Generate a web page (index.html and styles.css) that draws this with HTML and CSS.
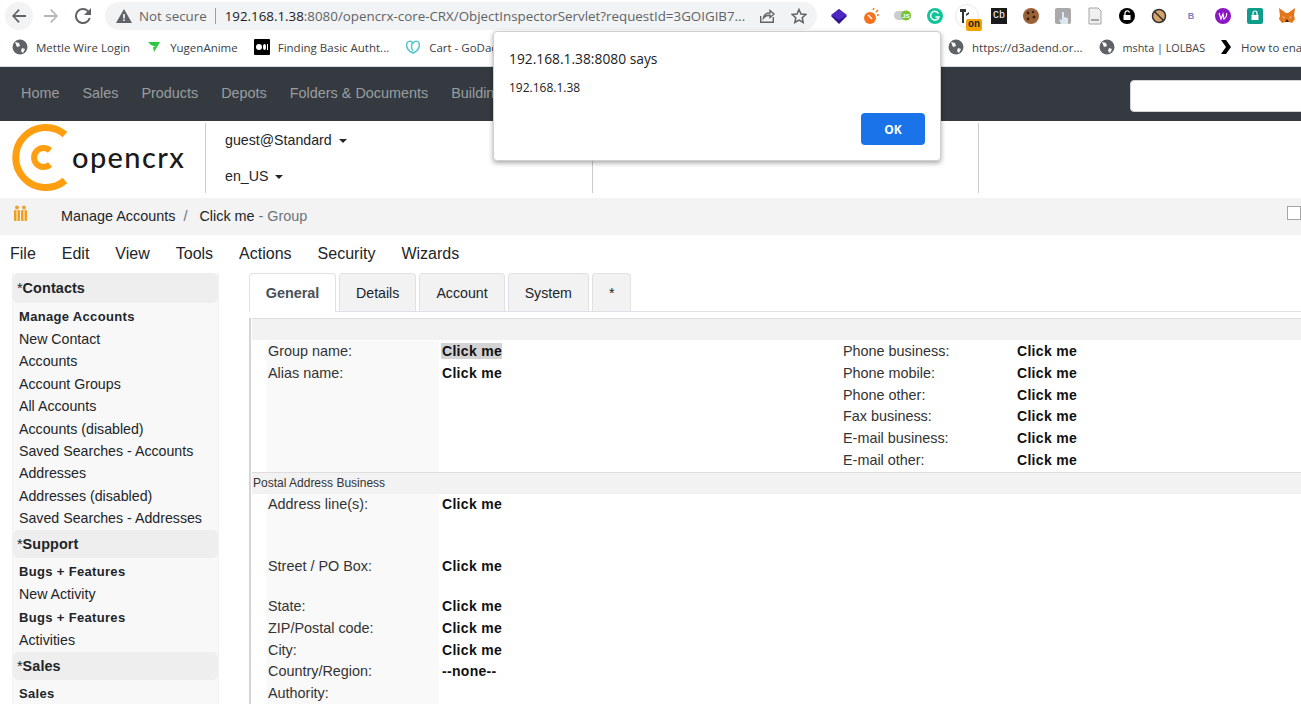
FILE: index.html

```html
<!DOCTYPE html>
<html lang="en">
<head>
    <meta charset="UTF-8">
    <title>Click me - Group</title>
    <link rel="stylesheet" href="styles.css">
</head>
<body>
    <div class="toolbar">
        <span class="round active"><svg width="16" height="16" viewBox="0 0 16 16"><path d="M15 7H4l4.7-4.6L7.5 1 1 8l6.500 7 1.200-1.400L4 9h11z" fill="#5f6368"/></svg></span>
        <span class="round"><svg width="16" height="16" viewBox="0 0 16 16"><path d="M1 7h11L7.300 2.400 8.500 1 15 8l-6.500 7-1.200-1.400L12 9H1z" fill="#b4b7ba"/></svg></span>
        <span class="round"><svg width="16" height="16" viewBox="0 0 16 16"><path d="M13.600 2.400A7.900 7.900 0 0 0 8 0a8 8 0 1 0 7.700 10h-2.100A6 6 0 1 1 8 2c1.700 0 3.100.7 4.200 1.800L9 7h7V0z" fill="#5f6368"/></svg></span>
        <div class="omnibox">
            <svg class="warn" width="16" height="14" viewBox="0 0 16 14"><path d="M8 0l8 14H0z" fill="#5f6368"/><path d="M7.200 5h1.600v4.500H7.200zM7.200 10.500h1.600V12H7.200z" fill="#fff"/></svg>
            <span class="secure">Not secure</span>
            <span class="url"><b>192.168.1.38</b>:8080/opencrx-core-CRX/ObjectInspectorServlet?requestId=3GOIGIB7...</span>
            <svg class="share" width="16" height="16" viewBox="0 0 16 16" fill="none" stroke="#5f6368" stroke-width="1.400"><path d="M1.700 8v6.300h12.600V9"/><path d="M4.500 10c.5-3.200 3-5 6.500-5V2.500L15 6l-4 3.500V7.300c-2.800 0-5 .8-6.500 2.700z"/></svg>
            <svg class="star" width="16" height="16" viewBox="0 0 16 16"><path d="M8 1.500l2 4.500 4.800.5-3.600 3.200 1 4.800L8 12.100l-4.200 2.400 1-4.800L1.200 6.500 6 6z" fill="none" stroke="#5f6368" stroke-width="1.500"/></svg>
        </div>
        <div class="extensions">
            <svg class="ext" width="18" height="18" viewBox="0 0 18 18"><path d="M9 2l8 7-8 8-8-8z" fill="#2c1590"/><path d="M1 8l8-6 8 6-8 5z" fill="#4f28c4"/></svg>
            <svg class="ext" width="18" height="18" viewBox="0 0 18 18"><circle cx="8" cy="11" r="6" fill="#f7711f"/><path d="M11 3l1-2M14 5l2-2M15 8h2" stroke="#f7711f" stroke-width="1.500"/><path d="M6 8l4 4" stroke="#fff" stroke-width="1.500"/></svg>
            <svg class="ext" width="18" height="18" viewBox="0 0 18 18"><rect x="0" y="4" width="17" height="9" rx="4.500" fill="#c9cccf"/><circle cx="12" cy="8.500" r="5" fill="#7cc42c"/><text x="12" y="11" class="ext-js">JS</text></svg>
            <svg class="ext" width="18" height="18" viewBox="0 0 18 18"><circle cx="9" cy="9" r="8" fill="#15c39a"/><path d="M12.500 6.300A4.300 4.300 0 1 0 13 10H9.500" fill="none" stroke="#fff" stroke-width="1.500"/></svg>
            <span class="ext-on"><svg width="24" height="24" viewBox="0 0 24 24"><circle cx="12" cy="12" r="11.500" fill="#fff" stroke="#e8e8e8"/><path d="M7 5h2v14H7zM5 5h6v3H5zM11 10l3-2v2l-3 2z" fill="#333"/></svg><span class="on-badge">on</span></span>
            <span class="ext-cb">Cb</span>
            <svg class="ext" width="18" height="18" viewBox="0 0 18 18"><circle cx="9" cy="9" r="8" fill="#9a6238"/><circle cx="6" cy="6" r="1.400" fill="#3a2110"/><circle cx="11" cy="5" r="1.200" fill="#3a2110"/><circle cx="12" cy="10" r="1.500" fill="#3a2110"/><circle cx="6" cy="12" r="1.400" fill="#3a2110"/></svg>
            <svg class="ext" width="18" height="18" viewBox="0 0 18 18"><rect x="1" y="1" width="16" height="16" rx="2" fill="#a9a9a9"/><path d="M8 5h2v5l4 1v6H7l-2-5 3 1z" fill="#dce9f3"/></svg>
            <svg class="ext" width="18" height="18" viewBox="0 0 18 18"><path d="M3 1h9l3 3v13H3z" fill="#f0f0f0" stroke="#a5a5a5"/><rect x="5" y="12" width="8" height="2" fill="#a5a5a5"/></svg>
            <svg class="ext" width="18" height="18" viewBox="0 0 18 18"><circle cx="9" cy="9" r="8" fill="#000"/><rect x="5.500" y="8" width="7" height="5" fill="#fff"/><path d="M7 8V6a2.300 2.300 0 0 1 4.500-.5" fill="none" stroke="#fff" stroke-width="1.300"/></svg>
            <svg class="ext" width="18" height="18" viewBox="0 0 18 18"><circle cx="9" cy="9" r="6.500" fill="#d7a36b" stroke="#333" stroke-width="1.500"/><path d="M4 4l10 10" stroke="#333" stroke-width="1.500"/></svg>
            <span class="ext-b">B</span>
            <svg class="ext" width="18" height="18" viewBox="0 0 18 18"><circle cx="9" cy="9" r="8" fill="#8a16c4"/><path d="M5 6l2 6 2-5 1 5c2-1 3-4 2.500-6" fill="none" stroke="#fff" stroke-width="1.200"/></svg>
            <svg class="ext" width="18" height="18" viewBox="0 0 18 18"><rect x="1" y="1" width="16" height="16" rx="2" fill="#0f9c8a"/><rect x="5.500" y="8" width="7" height="5" fill="#fff"/><path d="M7 8V6a2 2 0 0 1 4 0v2" fill="none" stroke="#fff" stroke-width="1.200"/></svg>
            <svg class="ext" width="18" height="18" viewBox="0 0 18 18"><path d="M1 1l7 5h2l7-5-1 8 1 3-3 4-3-1H7l-3 1-3-4 1-3z" fill="#e2761b"/><path d="M7 15l2-3 2 3z" fill="#3a2a1c"/><path d="M4 9l3 1-1 2zM14 9l-3 1 1 2z" fill="#f6b07a"/></svg>
        </div>
    </div>

    <div class="bookmarks">
        <div class="marks-left">
            <span class="mark"><svg class="globe" width="16" height="16" viewBox="0 0 16 16"><circle cx="8" cy="8" r="7.500" fill="#5f6368"/><path d="M3 3l4 1 1 3-3 1zM10 9l3 1-2 4-2-2z" fill="#fff"/></svg>Mettle Wire Login</span>
            <span class="mark"><svg width="16" height="16" viewBox="0 0 16 16"><path d="M2 3h12l-6 10-1-5h3L5 6z" fill="#27c93f"/></svg>YugenAnime</span>
            <span class="mark"><svg width="16" height="16" viewBox="0 0 16 16"><rect width="16" height="16" rx="1" fill="#000"/><circle cx="5" cy="8" r="3" fill="#fff"/><ellipse cx="10.500" cy="8" rx="1.500" ry="3" fill="#fff"/><rect x="13" y="5" width="1" height="6" fill="#fff"/></svg>Finding Basic Autht...</span>
            <span class="mark"><svg width="16" height="16" viewBox="0 0 16 16"><path d="M8 14C3 12 1 8 2 4c1-2 4-3 6 0 2-3 5-2 6 0 1 4-1 8-6 10zM8 3C6 6 6 9 8 12" fill="none" stroke="#4cc6cb" stroke-width="1.400"/></svg>Cart - GoDaddy</span>
        </div>
        <span class="mark"><svg class="globe" width="16" height="16" viewBox="0 0 16 16"><circle cx="8" cy="8" r="7.500" fill="#5f6368"/><path d="M3 3l4 1 1 3-3 1zM10 9l3 1-2 4-2-2z" fill="#fff"/></svg>https://d3adend.or...</span>
        <span class="mark mark-narrow"><svg class="globe" width="16" height="16" viewBox="0 0 16 16"><circle cx="8" cy="8" r="7.500" fill="#5f6368"/><path d="M3 3l4 1 1 3-3 1zM10 9l3 1-2 4-2-2z" fill="#fff"/></svg>mshta | LOLBAS</span>
        <span class="mark mark-tight"><svg width="12" height="16" viewBox="0 0 12 16"><path d="M1 1h5l5 7-5 7H1l5-7z" fill="#000"/></svg>How to enable</span>
    </div>

    <nav class="navbar">
        <a>Home</a><a>Sales</a><a>Products</a><a>Depots</a><a>Folders &amp; Documents</a><a>Buildings</a>
        <input class="search" type="text">
    </nav>

    <header class="page-head">
        <div class="logo">
            <svg width="66" height="67" viewBox="0 0 66 67" fill="none" stroke="#ff9e0f"><path d="M53 10.500A30 30 0 1 0 53 56.500" stroke-width="7"/><path d="M38 26.500A9.500 9.500 0 1 0 38 40.500" stroke-width="6"/></svg>
            <span class="logo-text">opencrx</span>
        </div>
        <div class="head-cell user-cell">
            <div class="drop">guest@Standard<i class="caret"></i></div>
            <div class="drop">en_US<i class="caret"></i></div>
        </div>
        <div class="head-cell mid-cell"></div>
        <div class="head-cell"></div>
    </header>

    <div class="crumbs">
        <svg class="crumb-icon" width="16" height="17" viewBox="0 0 16 17"><circle cx="4" cy="2.500" r="2" fill="#e8a33a"/><circle cx="11" cy="2.500" r="2" fill="#e8a33a"/><rect x="1" y="5" width="6" height="11" rx="1" fill="#f0a020"/><rect x="8" y="5" width="6" height="11" rx="1" fill="#f0a020"/><path d="M4 5v11M11 5v11" stroke="#fff3d8"/></svg>
        <span class="crumb">Manage Accounts</span><span class="crumb-sep">/</span><span class="crumb">Click me <em>- Group</em></span>
        <input class="crumb-check" type="checkbox">
    </div>

    <div class="menu">
        <a>File</a><a>Edit</a><a>View</a><a>Tools</a><a>Actions</a><a>Security</a><a>Wizards</a>
    </div>

    <div class="main">
        <aside class="sidebar">
            <h3>*<b>Contacts</b></h3>
            <ul>
                <li class="strong">Manage Accounts</li>
                <li>New Contact</li>
                <li>Accounts</li>
                <li>Account Groups</li>
                <li>All Accounts</li>
                <li>Accounts (disabled)</li>
                <li>Saved Searches - Accounts</li>
                <li>Addresses</li>
                <li>Addresses (disabled)</li>
                <li>Saved Searches - Addresses</li>
            </ul>
            <h3>*<b>Support</b></h3>
            <ul>
                <li class="strong">Bugs + Features</li>
                <li>New Activity</li>
                <li class="strong">Bugs + Features</li>
                <li>Activities</li>
            </ul>
            <h3>*<b>Sales</b></h3>
            <ul>
                <li class="strong">Sales</li>
            </ul>
        </aside>

        <section class="content">
            <div class="tabs">
                <a class="tab current">General</a><a class="tab">Details</a><a class="tab">Account</a><a class="tab">System</a><a class="tab">*</a>
            </div>
            <div class="panel">
                <div class="group-title"></div>
                <div class="fields first">
                    <div class="col left">
                        <div class="field"><label>Group name:</label><span class="picked">Click me</span></div>
                        <div class="field"><label>Alias name:</label><span>Click me</span></div>
                    </div>
                    <div class="col right">
                        <div class="field"><label>Phone business:</label><span>Click me</span></div>
                        <div class="field"><label>Phone mobile:</label><span>Click me</span></div>
                        <div class="field"><label>Phone other:</label><span>Click me</span></div>
                        <div class="field"><label>Fax business:</label><span>Click me</span></div>
                        <div class="field"><label>E-mail business:</label><span>Click me</span></div>
                        <div class="field"><label>E-mail other:</label><span>Click me</span></div>
                    </div>
                </div>
                <div class="group-title">Postal Address Business</div>
                <div class="fields">
                    <div class="col left">
                        <div class="field tall"><label>Address line(s):</label><span>Click me</span></div>
                        <div class="field street"><label>Street / PO Box:</label><span>Click me</span></div>
                        <div class="field"><label>State:</label><span>Click me</span></div>
                        <div class="field"><label>ZIP/Postal code:</label><span>Click me</span></div>
                        <div class="field"><label>City:</label><span>Click me</span></div>
                        <div class="field"><label>Country/Region:</label><span>--none--</span></div>
                        <div class="field"><label>Authority:</label><span></span></div>
                    </div>
                </div>
            </div>
        </section>
    </div>

    <div class="alert">
        <div class="alert-title">192.168.1.38:8080 says</div>
        <div class="alert-text">192.168.1.38</div>
        <div class="alert-foot"><button class="alert-ok">OK</button></div>
    </div>
</body>
</html>
```

FILE: styles.css

```css
html, body { margin: 0; padding: 0; }
body { width: 1301px; height: 704px; overflow: hidden; position: relative; background: #fff; font-family: "Liberation Sans", Arial, sans-serif; font-size: 14.4px; color: #212529; }

/* browser chrome */
.toolbar { height: 32px; display: flex; align-items: center; padding-left: 5px; box-sizing: border-box; }
.round { width: 28px; height: 28px; border-radius: 50%; display: flex; align-items: center; justify-content: center; margin-right: 4px; flex: none; }
.round.active { background: #f1f3f4; }
.omnibox { width: 712px; height: 28px; margin-left: 4px; border-radius: 14px; background: #f1f3f4; display: flex; align-items: center; flex: none; font-family: "Open Sans", sans-serif; font-size: 13.35px; white-space: nowrap; }
.warn { margin-left: 11px; flex: none; }
.secure { color: #5f6368; margin-left: 7px; padding-right: 8px; border-right: 1px solid #9aa0a6; line-height: 16px; }
.url { color: #5f6368; margin-left: 9px; width: 531px; overflow: hidden; }
.url b { color: #202124; font-weight: 400; }
.share { margin-left: 3px; }
.star { margin-left: 16px; }
.extensions { display: flex; align-items: center; margin-left: 13px; gap: 14px; }
.ext { flex: none; }
.ext-js { font: bold 6px "Liberation Sans", sans-serif; fill: #fff; text-anchor: middle; }
.ext-on { position: relative; width: 24px; height: 24px; margin: 0 -3px; }
.on-badge { position: absolute; left: 11px; top: 15px; width: 16px; height: 12px; background: #f5a300; border-radius: 2px; font: bold 10px/12px "Liberation Mono", monospace; text-align: center; color: #222; }
.ext-cb { width: 16px; height: 16px; background: #1a1a1a; color: #fff; font: 10px/16px "Liberation Mono", monospace; text-align: center; margin: 0 1px; }
.ext-b { width: 18px; text-align: center; color: #7d7fc7; font: bold 9px "Liberation Sans", sans-serif; }

.bookmarks { height: 34px; padding-bottom: 4px; box-sizing: border-box; display: flex; align-items: center; padding-left: 12px; font-family: "Open Sans", sans-serif; font-size: 11.5px; color: #3c4043; white-space: nowrap; overflow: hidden; }
.marks-left { width: 936px; display: flex; align-items: center; flex: none; overflow: hidden; }
.mark { display: flex; align-items: center; gap: 8px; margin-right: 16px; flex: none; }
.mark-narrow { font-size: 10.8px; }
.mark-tight { gap: 9px; margin-left: -1px; }

/* page header */
.navbar { height: 54px; border-top: 1px solid #dadce0; box-sizing: content-box; background: #343a40; display: flex; align-items: center; padding-left: 9.5px; position: relative; }
.navbar a { color: rgba(255,255,255,.5); padding: 0 11.5px 2px; }
.search { position: absolute; left: 1130px; top: 13px; width: 190px; height: 32px; box-sizing: border-box; border: 1px solid #ced4da; border-radius: 4px; background: #fff; }
.page-head { height: 77px; display: flex; }
.logo { width: 205px; display: flex; align-items: flex-start; padding: 3px 0 0 12px; box-sizing: border-box; }
.logo-text { font-family: "Lato", sans-serif; font-size: 29px; font-weight: 500; line-height: 36px; color: #1a1a1a; letter-spacing: 1.4px; margin: 15px 0 0 -6px; }
.head-cell { border-left: 1px solid #ccc; margin: 2px 0 5px; }
.user-cell { width: 387px; padding: 0 0 0 19px; box-sizing: border-box; }
.mid-cell { width: 386px; box-sizing: border-box; }
.drop { height: 36px; line-height: 34px; font-size: 14.2px; color: #212529; }
.caret { display: inline-block; margin-left: 7px; vertical-align: 2px; border-top: 4.500px solid #212529; border-left: 4.500px solid transparent; border-right: 4.500px solid transparent; }

.crumbs { height: 37px; box-sizing: border-box; padding: 0 0 2px 13px; background: #f3f3f3; display: flex; align-items: center; position: relative; }
.crumb-icon { margin-right: 32px; margin-bottom: 4px; }
.crumb { color: #212529; }
.crumb em { font-style: normal; color: #6c757d; }
.crumb-sep { color: #6c757d; margin: 0 12px 0 8px; }
.crumb-check { position: absolute; left: 1287px; top: 8px; width: 14px; height: 14px; margin: 0; appearance: none; border: 1px solid #a5a5a5; background: #fff; }

.menu { height: 38px; box-sizing: border-box; padding: 0 0 1px 10px; display: flex; align-items: center; font-size: 16px; gap: 26px; }

/* sidebar */
.main { display: flex; align-items: flex-start; }
.sidebar { width: 207px; margin-left: 12px; background: #f8f8f8; border: solid #f1f1f1; border-width: 0 1px; box-sizing: border-box; flex: none; height: 431px; }
.sidebar h3 { margin: 0; height: 28.5px; line-height: 28.5px; padding-left: 4px; background: #eee; border-radius: 6px; font-size: 14.4px; font-weight: 400; }
.sidebar h3:first-child { height: 30px; line-height: 30px; }
.sidebar h3 b { letter-spacing: .1px; }
.sidebar ul { list-style: none; margin: 0; padding: 1px 0 0 6px; font-size: 14.2px; }
.sidebar li { height: 22.4px; line-height: 22.4px; }
.sidebar li.strong { font-weight: bold; font-size: 13px; letter-spacing: .33px; height: 24px; line-height: 25px; }

/* content */
.content { flex: 1; margin-left: 30px; min-width: 0; }
.tabs { display: flex; height: 39px; box-sizing: border-box; gap: 3px; border-bottom: 1px solid #dee2e6; font-size: 14.2px; }
.tab { height: 38px; line-height: 38px; padding: 0 16px; box-sizing: border-box; background: #f2f2f2; border: 1px solid #dee2e6; border-bottom: 0; border-radius: 4px 4px 0 0; }
.tab.current { background: #fff; color: #495057; font-weight: bold; font-size: 14.4px; height: 39px; width: 87px; text-align: center; padding: 0; }
.panel { margin-top: 6px; border-left: 2px solid #d5d5d5; }
.group-title { height: 21px; line-height: 21px; margin-left: 1px; background: #f2f2f2; border-top: 1px solid #ddd; font-size: 12px; padding-left: 1px; color: #333; }
.fields { display: flex; padding-left: 16px; }
.fields.first { height: 131px; padding-top: 1px; }
.col.left { width: 575px; background: linear-gradient(to right, #f9f9f9 172px, transparent 172px); }
.field { height: 21.8px; line-height: 21.8px; display: flex; }
.field label { width: 174px; padding-left: 1px; box-sizing: border-box; color: #333; flex: none; }
.field span { font-weight: bold; font-size: 14px; letter-spacing: .3px; color: #111; padding: 0 0 0 1px; }
.field span.picked { background: #d3d3d3; align-self: flex-start; margin-top: 2px; line-height: 16px; }
.field.tall { height: 62px; }
.field.street { height: 40px; }

/* alert dialog */
.alert { position: absolute; left: 493px; top: 31px; width: 448px; height: 130px; box-sizing: border-box; padding: 17px 15px 0; background: #fff; border-radius: 4px; border: 1px solid #d0d0d0; box-shadow: 0 2px 5px rgba(0,0,0,.35); font-family: "Open Sans", sans-serif; color: #202124; }
.alert-title { font-size: 13.8px; line-height: 19px; }
.alert-text { font-size: 12px; line-height: 16px; margin-top: 12px; }
.alert-foot { display: flex; justify-content: flex-end; margin-top: 17px; }
.alert-ok { width: 64px; height: 32px; border: 0; border-radius: 4px; background: #1a73e8; color: #fff; font: bold 12px "Open Sans", sans-serif; }
```
